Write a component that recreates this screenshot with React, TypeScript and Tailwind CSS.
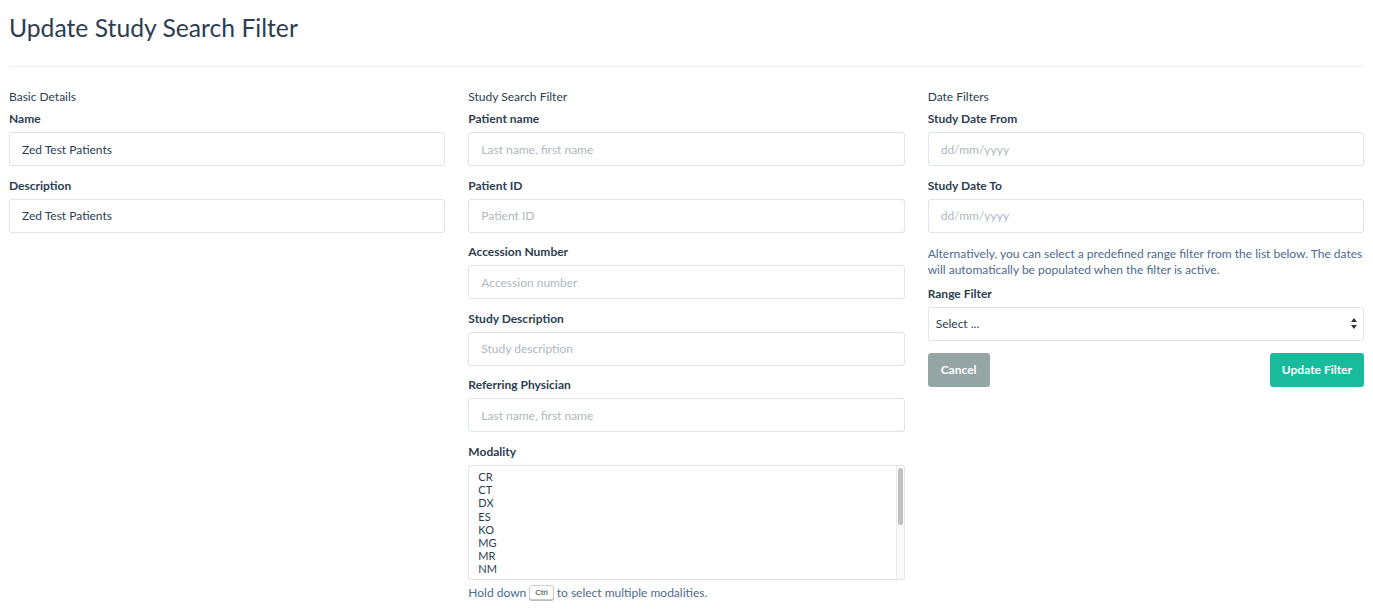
import React from 'react';

const modalities = ['CR', 'CT', 'DX', 'ES', 'KO', 'MG', 'MR', 'NM', 'OT'];

const Label: React.FC<{ children: React.ReactNode }> = ({ children }) => (
  <label className="block text-[12px] leading-[18px] font-bold mb-[4px] text-[#2c3e50]">{children}</label>
);

const inputClass =
  'block w-full h-[34px] px-[12px] text-[12px] text-[#2c3e50] placeholder:text-[#aeb8c2] bg-white border-[1.5px] border-[#dde4ec] rounded-[3px] outline-none';

const TextInput: React.FC<{ label: string; value?: string; placeholder?: string }> = ({ label, value, placeholder }) => (
  <div className="mb-[10.6px]">
    <Label>{label}</Label>
    <input readOnly value={value ?? ''} placeholder={placeholder} className={inputClass} />
  </div>
);

const SectionTitle: React.FC<{ children: React.ReactNode }> = ({ children }) => (
  <div className="text-[12px] leading-[18px] mb-[4px] text-[#2c3e50]">{children}</div>
);

export default function App() {
  return (
    <div className="min-h-screen bg-white px-[9px] text-[#2c3e50]" style={{ fontFamily: 'Lato, "Open Sans", sans-serif' }}>
      <h1 className="pt-[13px] text-[24.7px] leading-[30px] font-normal text-[#2c3e50]">Update Study Search Filter</h1>
      <div className="mt-[23px] border-t border-[#eeeeee]" />

      <div className="grid grid-cols-3 gap-x-[23px] mt-[21px]">
        {/* Basic details */}
        <div>
          <SectionTitle>Basic Details</SectionTitle>
          <TextInput label="Name" value="Zed Test Patients" />
          <TextInput label="Description" value="Zed Test Patients" />
        </div>

        {/* Study search filter */}
        <div>
          <SectionTitle>Study Search Filter</SectionTitle>
          <TextInput label="Patient name" placeholder="Last name, first name" />
          <TextInput label="Patient ID" placeholder="Patient ID" />
          <TextInput label="Accession Number" placeholder="Accession number" />
          <TextInput label="Study Description" placeholder="Study description" />
          <TextInput label="Referring Physician" placeholder="Last name, first name" />
          <div>
            <Label>Modality</Label>
            <div className="flex h-[115px] bg-white border-[1.5px] border-[#dde4ec] rounded-[2px] overflow-hidden">
              <div className="flex-1 pt-[4px] pl-[9px] overflow-hidden">
                {modalities.map((m) => (
                  <div key={m} className="text-[11px] leading-[13.2px] text-[#2c3e50]">{m}</div>
                ))}
              </div>
              <div className="w-[8px] bg-[#fafafa] border-l border-[#ececec] pt-[2px] flex justify-center">
                <div className="w-[5px] h-[57px] rounded-[3px] bg-[#c1c1c1]" />
              </div>
            </div>
            <p className="mt-[5px] text-[12px] leading-[16px] text-[#4e6a8f] flex items-center">
              Hold down
              <kbd
                className="mx-[3px] inline-flex items-center h-[15px] px-[5px] text-[8px] text-[#333] bg-white border border-[#cccccc] rounded-[3px] shadow-[0_1px_0_#bbb]"
                style={{ fontFamily: '"Liberation Sans", Arial, sans-serif' }}
              >
                Ctrl
              </kbd>
              to select multiple modalities.
            </p>
          </div>
        </div>

        {/* Date filters */}
        <div>
          <SectionTitle>Date Filters</SectionTitle>
          <TextInput label="Study Date From" placeholder="dd/mm/yyyy" />
          <div className="mb-[7px]">
            <Label>Study Date To</Label>
            <input readOnly placeholder="dd/mm/yyyy" className={inputClass} />
            <p className="mt-[13px] text-[12px] leading-[16px] text-[#4e6a8f]">
              Alternatively, you can select a predefined range filter from the list below. The dates will automatically be populated when the filter is active.
            </p>
          </div>
          <Label>Range Filter</Label>
          <div className="flex items-center justify-between h-[34px] pl-[7px] pr-[6px] bg-white border-[1.5px] border-[#dde4ec] rounded-[3px] text-[12px] text-[#2c3e50]">
            <span>Select ...</span>
            <svg width="6" height="11" viewBox="0 0 6 11" className="text-[#333]">
              <path d="M3 0 L6 4 L0 4 Z" fill="currentColor" />
              <path d="M3 11 L6 7 L0 7 Z" fill="currentColor" />
            </svg>
          </div>
          <div className="flex justify-between mt-[12px]">
            <button className="h-[34px] px-[13px] rounded-[3px] bg-[#95a5a6] text-white text-[12px] font-bold">Cancel</button>
            <button className="h-[34px] px-[12px] rounded-[3px] bg-[#18bc9c] text-white text-[12px] font-bold">Update Filter</button>
          </div>
        </div>
      </div>
    </div>
  );
}
